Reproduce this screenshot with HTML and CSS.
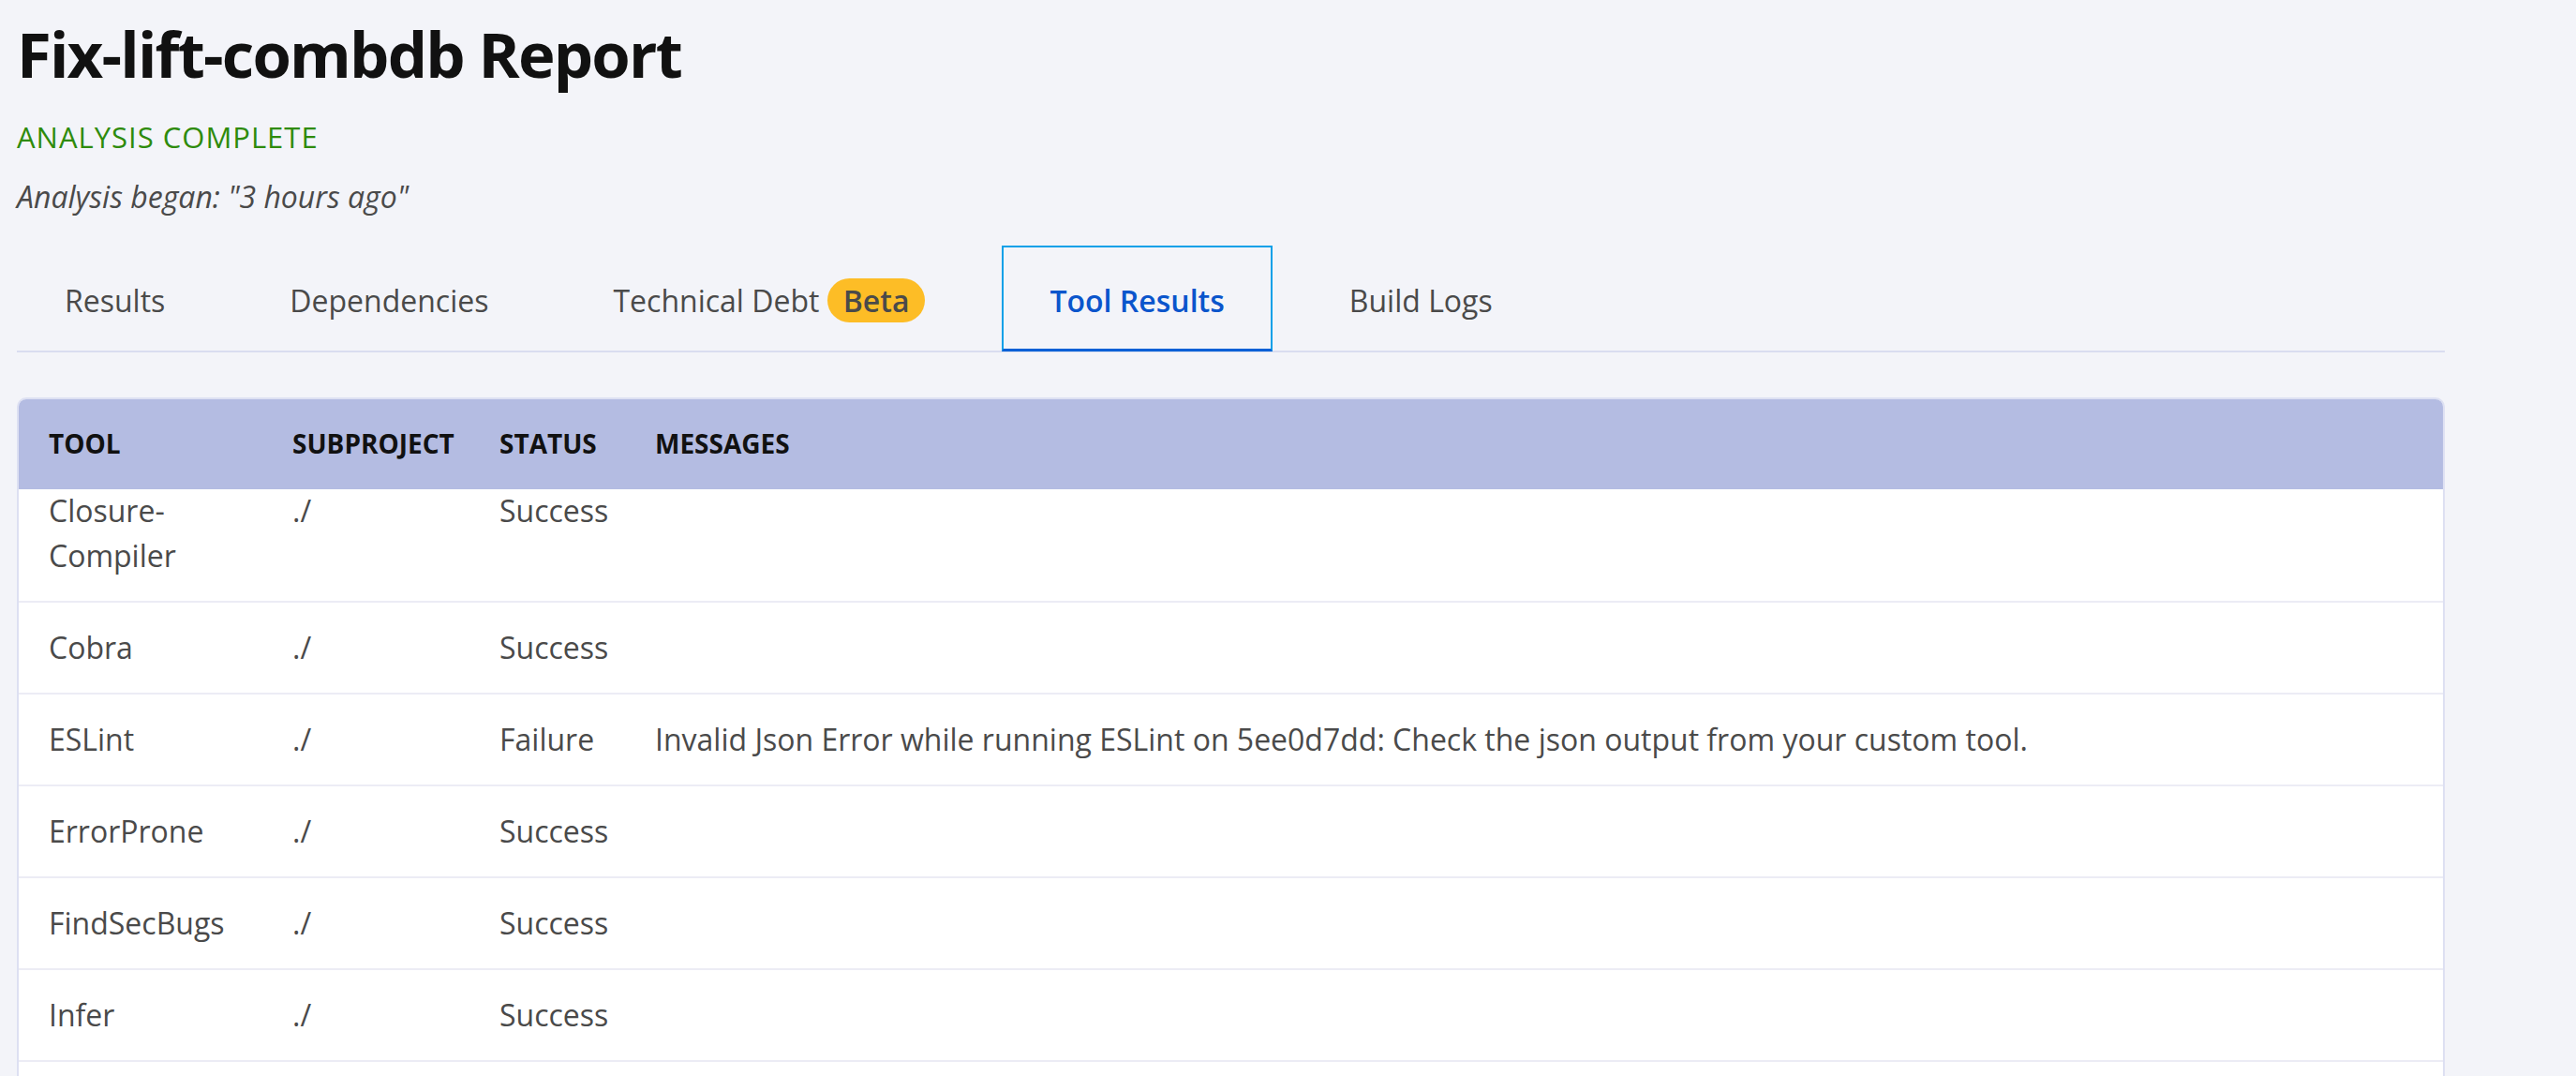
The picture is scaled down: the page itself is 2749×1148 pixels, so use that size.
FILE: index.html
```html
<!DOCTYPE html>
<html lang="en">
<head>
    <meta charset="UTF-8">
    <meta name="viewport" content="width=device-width, initial-scale=1.0">
    <title>Fix-lift-combdb Report</title>
    <link rel="stylesheet" href="styles.css">
</head>
<body>
    <div class="report">
        <h1 class="report-title">Fix-lift-combdb Report</h1>
        <p class="report-status">ANALYSIS COMPLETE</p>
        <p class="report-began">Analysis began: "3 hours ago"</p>

        <nav class="tabs">
            <a class="tab" href="#">Results</a>
            <a class="tab" href="#">Dependencies</a>
            <a class="tab" href="#">Technical Debt <span class="badge">Beta</span></a>
            <a class="tab active" href="#">Tool Results</a>
            <a class="tab" href="#">Build Logs</a>
        </nav>

        <div class="results-card">
            <div class="results-row results-head">
                <div class="cell">Tool</div>
                <div class="cell">Subproject</div>
                <div class="cell">Status</div>
                <div class="cell">Messages</div>
            </div>
            <div class="results-body">
                <!-- list is scrolled a little under the header -->
                <div class="results-list">
                    <div class="results-row">
                        <div class="cell">Closure-Compiler</div>
                        <div class="cell">./</div>
                        <div class="cell">Success</div>
                        <div class="cell"></div>
                    </div>
                    <div class="results-row">
                        <div class="cell">Cobra</div>
                        <div class="cell">./</div>
                        <div class="cell">Success</div>
                        <div class="cell"></div>
                    </div>
                    <div class="results-row">
                        <div class="cell">ESLint</div>
                        <div class="cell">./</div>
                        <div class="cell">Failure</div>
                        <div class="cell">Invalid Json Error while running ESLint on 5ee0d7dd: Check the json output from your custom tool.</div>
                    </div>
                    <div class="results-row">
                        <div class="cell">ErrorProne</div>
                        <div class="cell">./</div>
                        <div class="cell">Success</div>
                        <div class="cell"></div>
                    </div>
                    <div class="results-row">
                        <div class="cell">FindSecBugs</div>
                        <div class="cell">./</div>
                        <div class="cell">Success</div>
                        <div class="cell"></div>
                    </div>
                    <div class="results-row">
                        <div class="cell">Infer</div>
                        <div class="cell">./</div>
                        <div class="cell">Success</div>
                        <div class="cell"></div>
                    </div>
                </div>
            </div>
        </div>
    </div>
</body>
</html>
```

FILE: styles.css
```css
/* Tool results report */
* {
    margin: 0;
    padding: 0;
    box-sizing: border-box;
}

html,
body {
    height: 100%;
}

body {
    background-color: #f3f4f9;
    font-family: "Open Sans", "Noto Sans", sans-serif;
    color: #4a4a4a;
    overflow: hidden;
}

.report {
    width: 2591px;
    height: 100%;
    margin-left: 18px;
    padding-top: 16px;
    display: flex;
    flex-direction: column;
}

.report-title {
    font-size: 67px;
    line-height: 82px;
    font-weight: 700;
    letter-spacing: -1.8px;
    color: #111111;
}

.report-status {
    margin-top: 24px;
    font-size: 31px;
    line-height: 48px;
    letter-spacing: 1px;
    color: #2e8b0c;
}

.report-began {
    margin-top: 16px;
    font-size: 32px;
    line-height: 48px;
    font-style: italic;
    color: #4a4a4a;
}

/* Tabs */
.tabs {
    margin-top: 28px;
    display: flex;
    gap: 31px;
    border-bottom: 2px solid #d9ddf0;
    flex-shrink: 0;
}

.tab {
    padding: 33px 49px 27px;
    margin-bottom: -1px;
    border: 2px solid transparent;
    border-bottom-width: 3px;
    font-size: 32px;
    line-height: 48px;
    color: #4a4a4a;
    text-decoration: none;
    white-space: nowrap;
}

.tab.active {
    border-color: #0aa0e8;
    border-bottom-color: #0060d6;
    color: #0a55cc;
    font-weight: 600;
}

.badge {
    display: inline-block;
    padding: 0 17px;
    line-height: 47px;
    border-radius: 24px;
    background-color: #fdbd26;
    font-weight: 600;
    color: #4a4a4a;
}

/* Results table */
.results-card {
    margin-top: 48px;
    flex: 1;
    min-height: 0;
    display: flex;
    flex-direction: column;
    background-color: #ffffff;
    border: 2px solid #dde0f2;
    border-bottom: none;
    border-radius: 10px 10px 0 0;
    overflow: hidden;
}

.results-row {
    display: grid;
    grid-template-columns: 268px 221px 166px 1fr;
}

.cell {
    padding: 0 24px;
}

.cell:first-child {
    padding-left: 32px;
}

.results-head {
    height: 96px;
    flex-shrink: 0;
    align-items: center;
    background-color: #b4bce2;
    font-size: 28px;
    line-height: 1.2;
    font-weight: 700;
    color: #111111;
    text-transform: uppercase;
}

.results-body {
    flex: 1;
    overflow: hidden;
}

.results-list {
    margin-top: -25px;
}

.results-list .results-row {
    padding: 24px 0;
    border-bottom: 2px solid #ececf5;
    font-size: 32px;
    line-height: 48px;
}
```
